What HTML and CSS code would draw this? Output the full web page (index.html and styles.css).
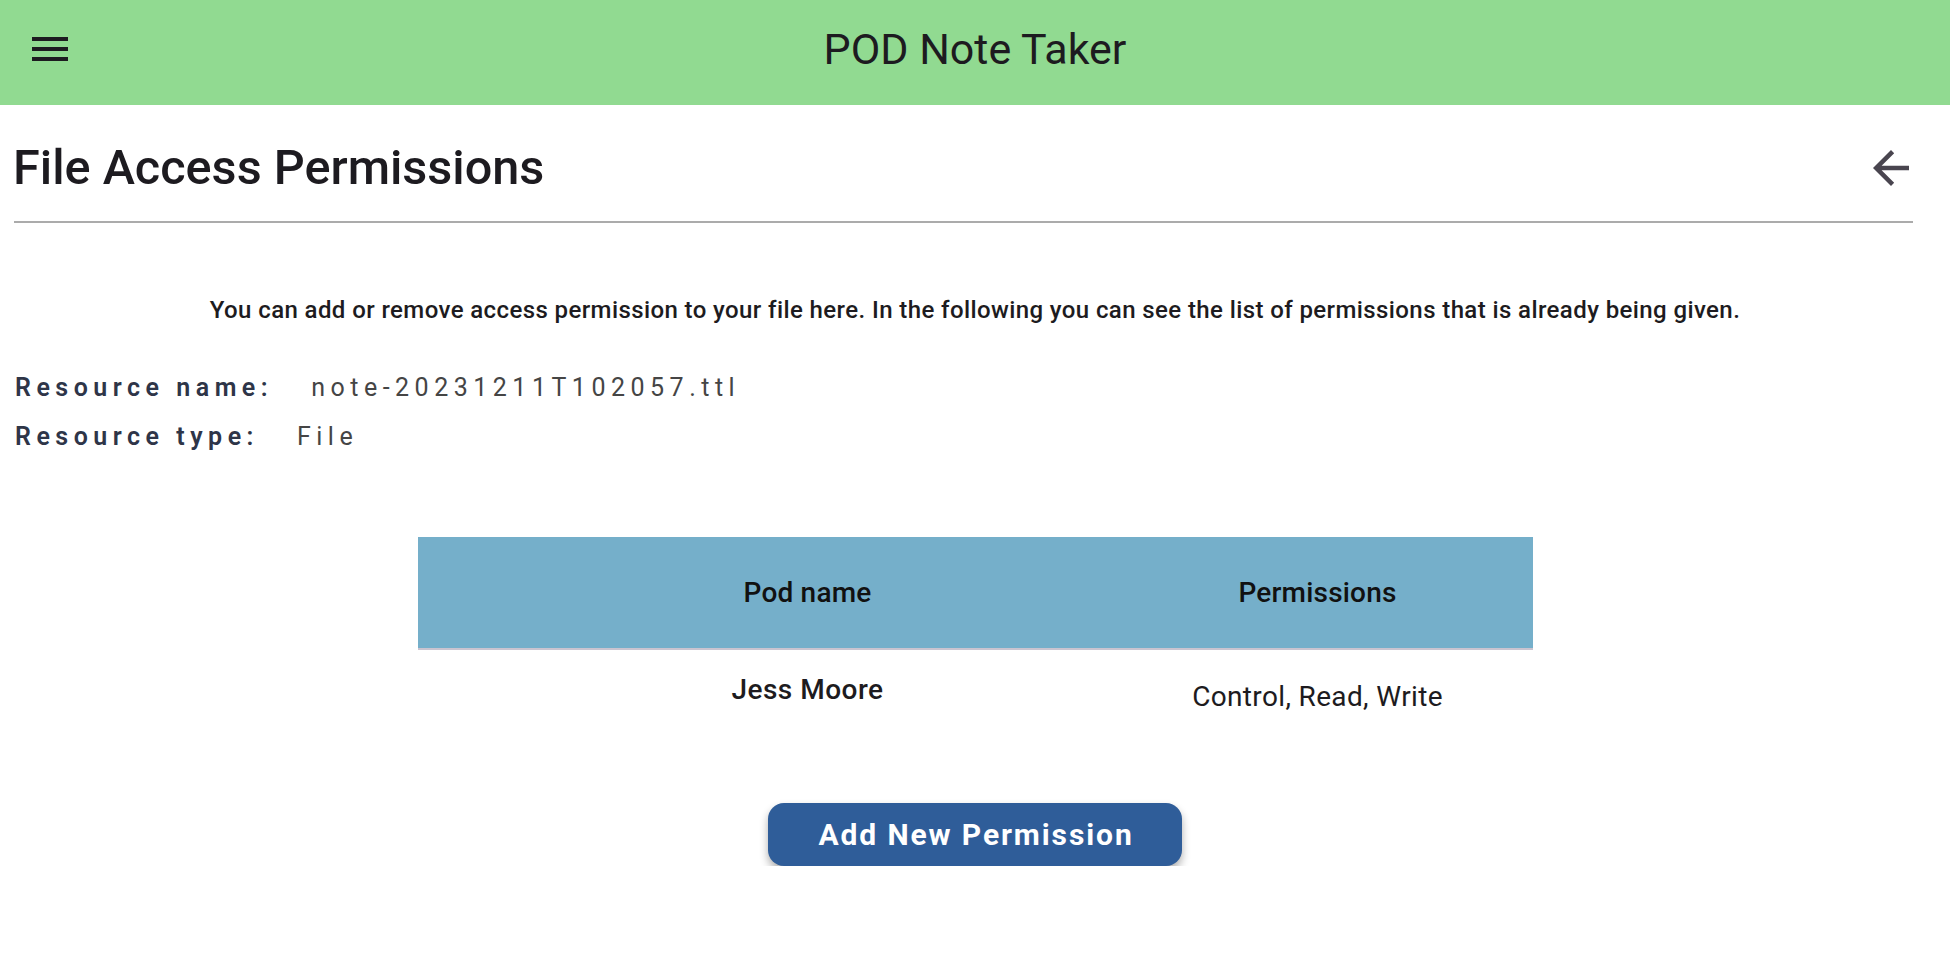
FILE: index.html
```html
<!DOCTYPE html>
<html lang="en">
<head>
<meta charset="utf-8">
<title>POD Note Taker</title>
<link rel="stylesheet" href="styles.css">
</head>
<body>
<header class="appbar">
  <div class="appbar-lead">
    <button class="icon-btn menu-btn" aria-label="Menu">
      <svg viewBox="0 0 24 24" width="48" height="48"><path d="M3 18h18v-2H3v2zm0-5h18v-2H3v2zm0-7v2h18V6H3z"/></svg>
    </button>
  </div>
  <h1 class="app-title">POD Note Taker</h1>
  <div class="appbar-trail"></div>
</header>
<main class="page">
  <section class="page-head-wrap">
    <div class="page-head">
      <h2 class="page-title">File Access Permissions</h2>
      <button class="icon-btn back-btn" aria-label="Back">
        <svg viewBox="0 0 24 24" width="54" height="54"><path d="M20 11H7.83l5.59-5.59L12 4l-8 8 8 8 1.41-1.41L7.830 13H20v-2z"/></svg>
      </button>
    </div>
    <hr class="divider">
  </section>
  <section class="content">
    <p class="intro">You can add or remove access permission to your file here. In the following you can see the list of permissions that is already being given.</p>
    <div class="resource">
      <div class="resource-row">
        <span class="res-label">Resource name:</span>
        <span class="res-value">note-20231211T102057.ttl</span>
      </div>
      <div class="resource-row">
        <span class="res-label">Resource type:</span>
        <span class="res-value">File</span>
      </div>
    </div>
    <div class="perm-table">
      <div class="perm-head">
        <div class="th">Pod name</div>
        <div class="th">Permissions</div>
      </div>
      <div class="perm-row">
        <div class="td td-name">Jess Moore</div>
        <div class="td td-perm">Control, Read, Write</div>
      </div>
    </div>
    <div class="actions">
      <button class="add-btn">Add New Permission</button>
    </div>
  </section>
</main>
</body>
</html>
```
FILE: styles.css
```css
* { box-sizing: border-box; }

html, body {
  margin: 0;
  padding: 0;
  background: #ffffff;
  font-family: Roboto, "Noto Sans", "Liberation Sans", sans-serif;
  color: #1d1b20;
}

.appbar {
  height: 105px;
  background: #91da91;
  display: grid;
  grid-template-columns: 1fr auto 1fr;
  align-items: center;
  padding-bottom: 7px;
}

.appbar-lead {
  padding-left: 26px;
  display: flex;
  align-items: center;
}

.icon-btn {
  border: none;
  background: transparent;
  padding: 0;
  margin: 0;
  display: flex;
  align-items: center;
  justify-content: center;
  cursor: pointer;
}

.menu-btn svg { fill: #1d1b20; display: block; }

.app-title {
  margin: 0;
  font-size: 43px;
  font-weight: 400;
  line-height: 50px;
  color: #1d1b20;
  white-space: nowrap;
}

.page-head-wrap {
  padding: 0 32px 0 13px;
}

.page-head {
  margin-top: 33px;
  height: 60px;
  display: flex;
  align-items: center;
  justify-content: space-between;
}

.page-title {
  margin: 0;
  font-size: 48.6px;
  font-weight: 500;
  line-height: 58px;
  color: #1d1b20;
}

.back-btn svg { fill: #49454f; display: block; }

.divider {
  margin: 23px 5px 0 1px;
  height: 2px;
  border: none;
  background: #ababab;
}

.content {
  padding: 0 15px;
}

.intro {
  margin: 73px 0 0;
  text-align: center;
  font-size: 24px;
  line-height: 28px;
  font-weight: 500;
  letter-spacing: 0.4px;
  color: #1d1b20;
}

.resource {
  margin-top: 49px;
  display: flex;
  flex-direction: column;
  gap: 19px;
}

.resource-row {
  display: flex;
  align-items: baseline;
  gap: 38px;
  font-size: 25px;
  line-height: 30px;
}

.res-label {
  font-weight: 600;
  letter-spacing: 5.5px;
  color: #2e3548;
}

.res-value {
  font-weight: 400;
  letter-spacing: 5.5px;
  color: #454545;
}

.perm-table {
  margin: 85px auto 0;
  width: 1115px;
}

.perm-head,
.perm-row {
  display: grid;
  grid-template-columns: 780px 240px;
}

.perm-head {
  height: 113px;
  background: #75afca;
  border-bottom: 2px solid #cac4d0;
  align-items: center;
}

.th,
.td {
  display: flex;
  justify-content: center;
  white-space: nowrap;
}

.th {
  font-size: 28px;
  line-height: 33px;
  font-weight: 500;
  letter-spacing: 0.2px;
  color: #111111;
}

.perm-row {
  height: 99px;
  align-items: start;
}

.td {
  color: #1d1b20;
}

.td-name {
  padding-top: 23px;
  font-size: 28px;
  line-height: 33px;
  font-weight: 500;
  letter-spacing: 0.5px;
}

.td-perm {
  padding-top: 30px;
  font-size: 28px;
  line-height: 33px;
  font-weight: 400;
  letter-spacing: 0.35px;
}

.actions {
  margin-top: 54px;
  display: flex;
  justify-content: center;
}

.add-btn {
  height: 63px;
  padding: 0 48px 0 50px;
  border: none;
  border-radius: 16px;
  background: #2f5d99;
  color: #ffffff;
  font-family: Roboto, "Noto Sans", "Liberation Sans", sans-serif;
  font-size: 30px;
  font-weight: 700;
  letter-spacing: 1.9px;
  box-shadow: 0 5px 9px rgba(0, 0, 0, 0.32);
  cursor: pointer;
}
```
